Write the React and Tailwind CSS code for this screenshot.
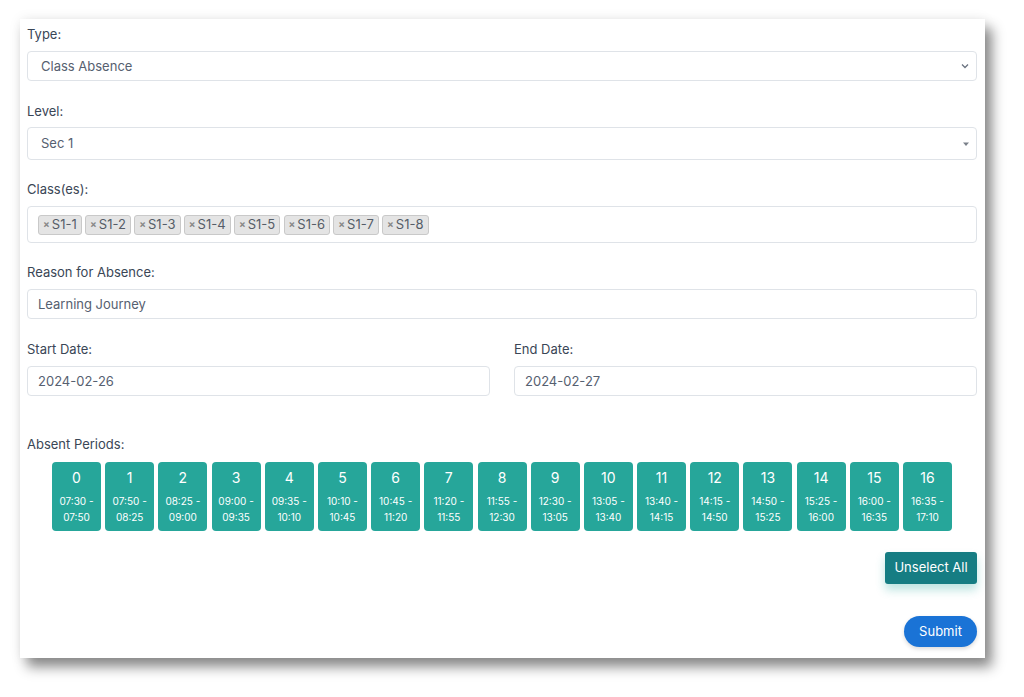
import React from 'react';

const PERIODS = [
  ['07:30', '07:50'], ['07:50', '08:25'], ['08:25', '09:00'], ['09:00', '09:35'],
  ['09:35', '10:10'], ['10:10', '10:45'], ['10:45', '11:20'], ['11:20', '11:55'],
  ['11:55', '12:30'], ['12:30', '13:05'], ['13:05', '13:40'], ['13:40', '14:15'],
  ['14:15', '14:50'], ['14:50', '15:25'], ['15:25', '16:00'], ['16:00', '16:35'],
  ['16:35', '17:10'],
];

const CLASSES = ['S1-1', 'S1-2', 'S1-3', 'S1-4', 'S1-5', 'S1-6', 'S1-7', 'S1-8'];

function Label({ children, className = '' }) {
  return <div className={`h-5 leading-5 text-[13px] text-[#3a4656] ${className}`}>{children}</div>;
}

export default function App() {
  return (
    <div className="w-[1024px] h-[697px] bg-white pt-[19px] pl-[20px] overflow-hidden" style={{ fontFamily: 'Inter, "Noto Sans", sans-serif' }}>
      <div className="w-[965px] h-[639px] bg-white pt-[5px] pl-[7px] pr-[8px] shadow-[0_0_12px_rgba(0,0,0,0.07),7px_9px_12px_rgba(0,0,0,0.45)]">
        <Label>Type:</Label>
        <div className="mt-[7px] h-[30px] border border-[#dfe3e8] rounded-[4px] flex items-center justify-between pl-[13px] pr-[6px] text-[13px] text-[#566070]">
          <span className="mt-[1px]">Class Absence</span>
          <svg width="10" height="10" viewBox="0 0 10 10" fill="none" stroke="#6b7380" strokeWidth="1.3"><path d="M2 3.5 L5 6.5 L8 3.5" /></svg>
        </div>

        <Label className="mt-[20px]">Level:</Label>
        <div className="mt-[6px] h-[33px] border border-[#dfe3e8] rounded-[4px] flex items-center justify-between pl-[13px] pr-[5px] text-[13px] text-[#566070]">
          <span>Sec 1</span>
          <svg width="10" height="10" viewBox="0 0 10 10"><path d="M2 3.5 H8 L5 7 Z" fill="#7a808a" /></svg>
        </div>

        <Label className="mt-[19px]">Class(es):</Label>
        <div className="mt-[7px] h-[37px] border border-[#dfe3e8] rounded-[4px] flex items-center pl-[10px] gap-[3.3px]">
          {CLASSES.map(c => (
            <span key={c} className="h-[20px] px-[4px] flex items-center gap-[2px] bg-[#e4e4e4] border border-[#c9c9c9] rounded-[3px] text-[13px] text-[#555d68]">
              <span className="text-[10px] text-[#888] font-bold">×</span>{c}
            </span>
          ))}
        </div>

        <Label className="mt-[19px]">Reason for Absence:</Label>
        <div className="mt-[7px] h-[30px] border border-[#dfe3e8] rounded-[4px] flex items-center pl-[10px] text-[13px] text-[#566070]">
          <span className="mt-[1px]">Learning Journey</span>
        </div>

        <div className="mt-[20px] grid grid-cols-2 gap-x-[24px]">
          <div>
            <Label>Start Date:</Label>
            <div className="mt-[7px] h-[30px] border border-[#dfe3e8] rounded-[4px] flex items-center pl-[10px] text-[13px] text-[#566070]"><span className="mt-[1px]">2024-02-26</span></div>
          </div>
          <div>
            <Label>End Date:</Label>
            <div className="mt-[7px] h-[30px] border border-[#dfe3e8] rounded-[4px] flex items-center pl-[10px] text-[13px] text-[#566070]"><span className="mt-[1px]">2024-02-27</span></div>
          </div>
        </div>

        <Label className="mt-[38px]">Absent Periods:</Label>
        <div className="mt-[8px] flex justify-center gap-[4.2px]">
          {PERIODS.map(([a, b], i) => (
            <div key={i} className="w-[49px] h-[69px] bg-[#26a69a] rounded-[4px] flex flex-col items-center text-white">
              <div className="mt-[7px] text-[14px] leading-[18px]">{i}</div>
              <div className="mt-[6px] text-[10px] leading-[16px] text-center">{a} -<br />{b}</div>
            </div>
          ))}
        </div>

        <div className="mt-[21px] flex justify-end">
          <button className="h-[32px] w-[92px] bg-[#167d83] text-white text-[13px] rounded-[3px] shadow-[0_6px_10px_rgba(38,166,154,0.3)]">Unselect All</button>
        </div>
        <div className="mt-[32px] flex justify-end">
          <button className="h-[31px] w-[73px] bg-[#1a73d6] text-white text-[13px] rounded-full shadow-[0_2px_4px_rgba(0,0,0,0.15)]">Submit</button>
        </div>
      </div>
    </div>
  );
}
